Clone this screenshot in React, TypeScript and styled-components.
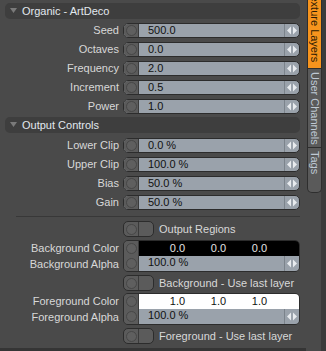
import styled, { createGlobalStyle } from 'styled-components';

const GlobalStyle = createGlobalStyle`
  body {
    margin: 0;
    background: #4a4a4a;
    font-family: "Liberation Sans", Arial, sans-serif;
  }
`;

const Root = styled.div`
  width: 326px;
  height: 351px;
  display: flex;
  background: #4a4a4a;
  overflow: hidden;
  box-shadow: inset 0 -3px 0 #353535;
`;

const Main = styled.div`
  width: 306px;
  box-sizing: border-box;
  padding: 3px 6px 0 5px;
  display: flex;
  flex-direction: column;
  font-size: 11px;
`;

const Header = styled.div<{ $mt?: number }>`
  height: 16px;
  margin-top: ${(p) => p.$mt ?? 0}px;
  background: #3e3e3e;
  border-radius: 5px;
  display: flex;
  align-items: center;
  gap: 5px;
  padding-left: 5px;
  color: #e2e8ee;
  font-size: 11px;
`;

const Rows = styled.div<{ $mt: number }>`
  display: flex;
  flex-direction: column;
  gap: 4px;
  margin-top: ${(p) => p.$mt}px;
`;

const Row = styled.div<{ $mt?: number }>`
  display: grid;
  grid-template-columns: 114px 177px;
  column-gap: 4px;
  margin-top: ${(p) => p.$mt ?? 0}px;
`;

const Labels = styled.div`
  display: flex;
  flex-direction: column;
  align-items: flex-end;
`;

const Label = styled.div<{ $h: number }>`
  height: ${(p) => p.$h}px;
  line-height: ${(p) => p.$h}px;
  color: #d8d8d8;
  white-space: nowrap;
`;

const Field = styled.div`
  height: 15px;
  box-sizing: border-box;
  display: flex;
  border: 1px solid #2c2c2c;
  border-radius: 5px;
  overflow: hidden;
  background: #9aa2ab;
`;

const KnobCell = styled.div<{ $h: number }>`
  width: 15px;
  height: ${(p) => p.$h}px;
  flex-shrink: 0;
  box-sizing: border-box;
  background: #5b5b5b;
  border-right: 1px solid #3a3a3a;
  display: flex;
  align-items: center;
  justify-content: center;
`;

const Circle = styled.div`
  width: 9px;
  height: 9px;
  border-radius: 50%;
  border: 1px solid #474747;
  background: #5f5f5f;
`;

const Value = styled.div`
  flex: 1;
  padding-left: 9px;
  line-height: 13px;
  color: #111;
  white-space: nowrap;
`;

const Spinner = styled.div`
  width: 14px;
  flex-shrink: 0;
  border-left: 1px solid #7b838b;
  display: flex;
  align-items: center;
  justify-content: center;
`;

const Separator = styled.div`
  height: 1px;
  margin: 6px 0 0 11px;
  background: #383838;
`;

const ToggleLine = styled.div<{ $mt: number }>`
  display: flex;
  align-items: center;
  gap: 5px;
  margin: ${(p) => p.$mt}px 0 0 118px;
  color: #d8d8d8;
  white-space: nowrap;
`;

const Toggle = styled.div`
  width: 31px;
  height: 16px;
  box-sizing: border-box;
  display: flex;
  border: 1px solid #2c2c2c;
  border-radius: 5px;
  overflow: hidden;
  background: #5b5b5b;
`;

const ToggleHalf = styled.div`
  flex: 1;
  display: flex;
  align-items: center;
  justify-content: center;
  & + & {
    border-left: 1px solid #3a3a3a;
  }
`;

const ColorGroup = styled.div`
  height: 32px;
  box-sizing: border-box;
  display: flex;
  border: 1px solid #2c2c2c;
  border-radius: 5px;
  overflow: hidden;
`;

const Knobs = styled.div`
  display: flex;
  flex-direction: column;
`;

const ColorBody = styled.div`
  flex: 1;
  display: flex;
  flex-direction: column;
`;

const Swatch = styled.div<{ $light: boolean }>`
  height: 15px;
  display: flex;
  padding-left: 18px;
  background: ${(p) => (p.$light ? '#ffffff' : '#000000')};
  color: ${(p) => (p.$light ? '#111' : '#e4e4e4')};
  line-height: 15px;
`;

const Channel = styled.span`
  width: 41px;
  text-align: center;
`;

const AlphaRow = styled.div`
  flex: 1;
  display: flex;
  background: #9aa2ab;
`;

const TabStrip = styled.div`
  width: 20px;
  display: flex;
  flex-direction: column;
  padding-left: 1px;
  background: #4a4a4a;
  border-right: 5px solid #3b3b3b;
  box-sizing: border-box;
  width: 20px;
`;

const Tab = styled.div<{ $active?: boolean; $h: number; $last?: boolean }>`
  width: 15px;
  height: ${(p) => p.$h}px;
  flex-shrink: 0;
  box-sizing: border-box;
  writing-mode: vertical-rl;
  font-size: 11px;
  padding-top: 3px;
  line-height: 13px;
  white-space: nowrap;
  border: 1px solid #2e2e2e;
  border-top: none;
  background: ${(p) => (p.$active ? '#f7941d' : '#5a5a5a')};
  color: ${(p) => (p.$active ? '#2b1a04' : '#bfc9d4')};
  border-radius: ${(p) => (p.$last ? '0 0 5px 5px' : '0')};
`;

const ActiveTab = styled(Tab)`
  margin-top: -23px;
  padding-top: 13px;
`;

const Triangle = () => (
  <svg width="7" height="6" viewBox="0 0 7 6">
    <polygon points="0,0 7,0 3.5,5" fill="#7a7a7a" />
  </svg>
);

const Arrows = () => (
  <svg width="12" height="11" viewBox="0 0 12 11">
    <polygon points="1,5.5 5,1.5 5,9.5" fill="#e8ebee" />
    <polygon points="7,1.5 11,5.5 7,9.5" fill="#e8ebee" />
  </svg>
);

const NumField = ({ label, value }: { label: string; value: string }) => (
  <Row>
    <Labels>
      <Label $h={15}>{label}</Label>
    </Labels>
    <Field>
      <KnobCell $h={13}>
        <Circle />
      </KnobCell>
      <Value>{value}</Value>
      <Spinner>
        <Arrows />
      </Spinner>
    </Field>
  </Row>
);

const ToggleItem = ({ text, mt }: { text: string; mt: number }) => (
  <ToggleLine $mt={mt}>
    <Toggle>
      <ToggleHalf>
        <Circle />
      </ToggleHalf>
      <ToggleHalf />
    </Toggle>
    {text}
  </ToggleLine>
);

const ColorField = ({
  name,
  light,
  channels,
  mt,
}: {
  name: string;
  light: boolean;
  channels: string[];
  mt: number;
}) => (
  <Row $mt={mt}>
    <Labels>
      <Label $h={16}>{name} Color</Label>
      <Label $h={16}>{name} Alpha</Label>
    </Labels>
    <ColorGroup>
      <Knobs>
        <KnobCell $h={15}>
          <Circle />
        </KnobCell>
        <KnobCell $h={15}>
          <Circle />
        </KnobCell>
      </Knobs>
      <ColorBody>
        <Swatch $light={light}>
          {channels.map((c, i) => (
            <Channel key={i}>{c}</Channel>
          ))}
        </Swatch>
        <AlphaRow>
          <Value>100.0 %</Value>
          <Spinner>
            <Arrows />
          </Spinner>
        </AlphaRow>
      </ColorBody>
    </ColorGroup>
  </Row>
);

const organic = [
  ['Seed', '500.0'],
  ['Octaves', '0.0'],
  ['Frequency', '2.0'],
  ['Increment', '0.5'],
  ['Power', '1.0'],
];

const output = [
  ['Lower Clip', '0.0 %'],
  ['Upper Clip', '100.0 %'],
  ['Bias', '50.0 %'],
  ['Gain', '50.0 %'],
];

export default function App() {
  return (
    <>
      <GlobalStyle />
      <Root>
        <Main>
          <Header>
            <Triangle />
            Organic - ArtDeco
          </Header>
          <Rows $mt={4}>
            {organic.map(([l, v]) => (
              <NumField key={l} label={l} value={v} />
            ))}
          </Rows>
          <Header $mt={3}>
            <Triangle />
            Output Controls
          </Header>
          <Rows $mt={5}>
            {output.map(([l, v]) => (
              <NumField key={l} label={l} value={v} />
            ))}
          </Rows>
          <Separator />
          <ToggleItem text="Output Regions" mt={4} />
          <ColorField name="Background" light={false} channels={['0.0', '0.0', '0.0']} mt={3} />
          <ToggleItem text="Background - Use last layer" mt={3} />
          <ColorField name="Foreground" light channels={['1.0', '1.0', '1.0']} mt={2} />
          <ToggleItem text="Foreground - Use last layer" mt={3} />
        </Main>
        <TabStrip>
          <ActiveTab $active $h={92}>
            Texture Layers
          </ActiveTab>
          <Tab $h={79}>User Channels</Tab>
          <Tab $h={45} $last>
            Tags
          </Tab>
        </TabStrip>
      </Root>
    </>
  );
}
